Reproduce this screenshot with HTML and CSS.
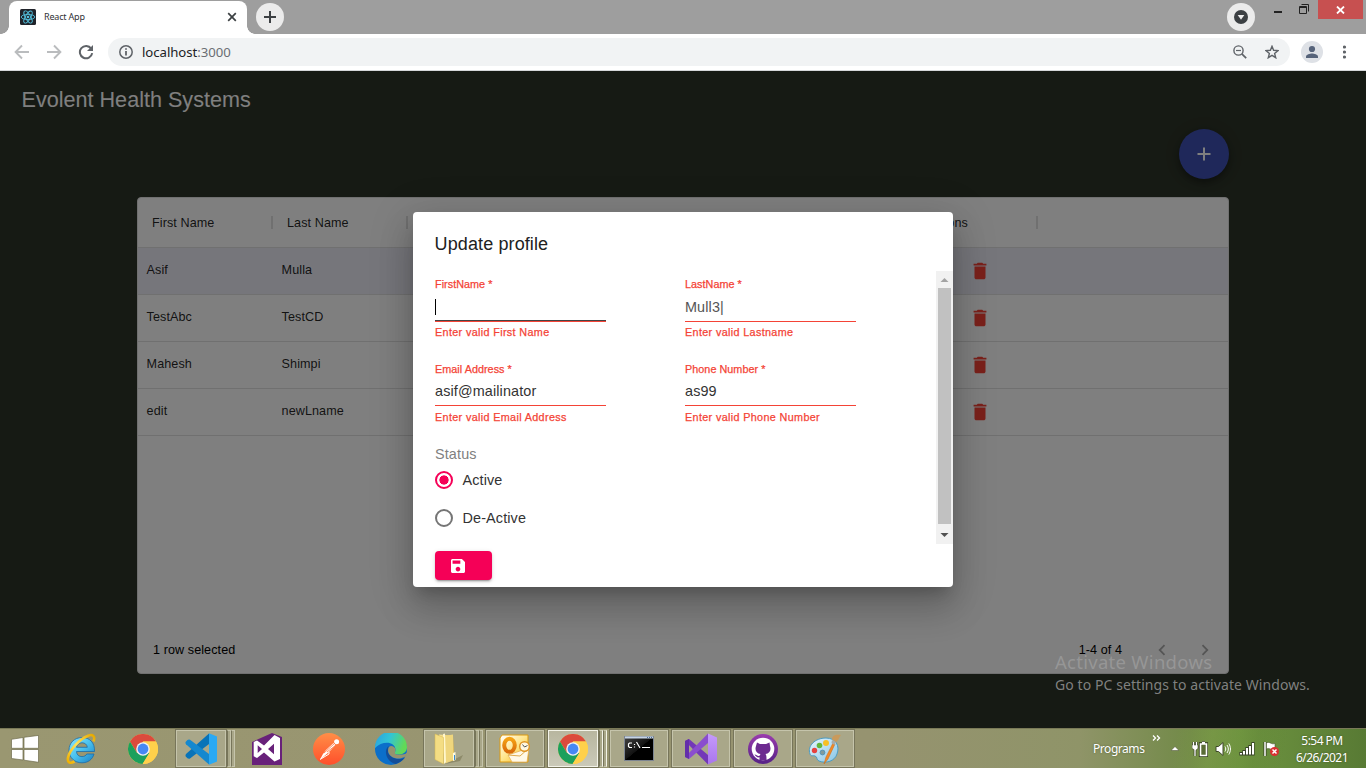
FILE: index.html
```html
<!DOCTYPE html>
<html lang="en">
<head>
<meta charset="utf-8">
<title>React App</title>
<link rel="stylesheet" href="styles.css">
</head>
<body>
<svg class="defs" width="0" height="0">
  <defs>
    <linearGradient id="ie" x1="0" y1="0" x2="1" y2="1"><stop offset="0" stop-color="#8fe6fd"/><stop offset=".5" stop-color="#49c1ee"/><stop offset="1" stop-color="#1a7fc4"/></linearGradient>
    <linearGradient id="gold" x1="1" y1="0" x2="0" y2="1"><stop offset="0" stop-color="#e5a800"/><stop offset=".5" stop-color="#ffe25a"/><stop offset="1" stop-color="#f0b000"/></linearGradient>
    <linearGradient id="post" x1="0" y1="0" x2="0" y2="1"><stop offset="0" stop-color="#ff8e47"/><stop offset="1" stop-color="#ff4f2b"/></linearGradient>
    <linearGradient id="edgetop" x1="0" y1="0" x2="1" y2=".3"><stop offset="0" stop-color="#2a9fe0"/><stop offset=".5" stop-color="#31c4d6"/><stop offset="1" stop-color="#62d957"/></linearGradient>
    <linearGradient id="paper" x1="0" y1="0" x2="1" y2="0"><stop offset="0" stop-color="#f7e59a"/><stop offset="1" stop-color="#e3bd50"/></linearGradient>
    <linearGradient id="outl" x1="0" y1="0" x2="1" y2="1"><stop offset="0" stop-color="#fff"/><stop offset=".5" stop-color="#ffe58a"/><stop offset="1" stop-color="#f3b010"/></linearGradient>
    <linearGradient id="orange" x1="0" y1="0" x2="0" y2="1"><stop offset="0" stop-color="#f5a213"/><stop offset="1" stop-color="#d96b0b"/></linearGradient>
    <linearGradient id="cmd" x1="0" y1="0" x2="1" y2="1"><stop offset="0" stop-color="#444"/><stop offset=".5" stop-color="#111"/><stop offset=".51" stop-color="#000"/></linearGradient>
    <linearGradient id="vsr" x1="0" y1="0" x2="0" y2="1"><stop offset="0" stop-color="#c59bfb"/><stop offset="1" stop-color="#a975ee"/></linearGradient>
    <linearGradient id="gh" x1="0" y1="0" x2="0" y2="1"><stop offset="0" stop-color="#9a3cae"/><stop offset="1" stop-color="#562286"/></linearGradient>
    <linearGradient id="pal" x1="0" y1="0" x2="1" y2="1"><stop offset="0" stop-color="#e8f6fd"/><stop offset="1" stop-color="#86c5e6"/></linearGradient>
    <symbol id="chrome" viewBox="0 0 30 30">
      <circle cx="15" cy="15" r="15" fill="#ffd04b"/>
      <path d="M15 7.5H28A15 15 0 0 0 2 7.5L9 19Z" fill="#db4a3d"/>
      <path d="M2 7.5A15 15 0 0 0 14.6 30L21.3 19 9 19Z" fill="#1ca05c"/>
      <path d="M28 7.5H15L21.5 18.8 14.6 30A15 15 0 0 0 28 7.5Z" fill="#ffd04b"/>
      <circle cx="15" cy="15" r="6.8" fill="#f1f1f1"/><circle cx="15" cy="15" r="5.4" fill="#4788f3"/>
    </symbol>
    <symbol id="trash" viewBox="0 0 24 24"><path fill="#f44336" d="M6 19c0 1.100.900 2 2 2h8c1.100 0 2-.900 2-2V7H6v12zM19 4h-3.500l-1-1h-5l-1 1H5v2h14V4z"/></symbol>
  </defs>
</svg>

<header class="tabstrip">
  <div class="tab">
    <svg class="favicon" viewBox="0 0 16 16"><rect width="16" height="16" rx="1.500" fill="#20232a"/><g fill="none" stroke="#53c1de" stroke-width=".9"><ellipse cx="8" cy="8" rx="6.800" ry="2.600"/><ellipse cx="8" cy="8" rx="6.800" ry="2.600" transform="rotate(60 8 8)"/><ellipse cx="8" cy="8" rx="6.800" ry="2.600" transform="rotate(120 8 8)"/></g><circle cx="8" cy="8" r="1.300" fill="#53c1de"/></svg>
    <span class="tab-title">React App</span>
    <svg class="tab-close" viewBox="0 0 10 10"><path d="M1.200 1.200 8.800 8.800M8.800 1.200 1.200 8.800" stroke="#3c4043" stroke-width="1.700"/></svg>
  </div>
  <div class="round"><svg width="12" height="12" viewBox="0 0 12 12"><path d="M6 0V12M0 6H12" stroke="#3c4043" stroke-width="2"/></svg></div>
  <div class="window-tools">
    <div class="round"><svg width="14" height="14" viewBox="0 0 14 14"><circle cx="7" cy="7" r="7" fill="#3c4043"/><path d="M3.700 5H10.300L7 9.700Z" fill="#eee"/></svg></div>
    <svg class="window-min" width="8" height="2"><rect width="8" height="2" fill="#222"/></svg>
    <svg class="window-max" width="10" height="10" viewBox="0 0 10 10"><path d="M.5 2.500H7.500V9.500H.5ZM.5 3.500H7.500M2.500 .5H9.500V7.500" fill="none" stroke="#222"/></svg>
    <div class="window-close"><svg width="9" height="8" viewBox="0 0 9 8"><path d="M1 .5 8 7.500M8 .5 1 7.500" stroke="#fff" stroke-width="1.800"/></svg></div>
  </div>
</header>

<nav class="toolbar">
  <svg class="nav-icon" viewBox="0 0 16 16"><path d="M15 8H2M8 1.500 1.600 8 8 14.500" fill="none" stroke="#babcbe" stroke-width="1.900"/></svg>
  <svg class="nav-icon" viewBox="0 0 16 16"><path d="M1 8H14M8 1.500 14.400 8 8 14.500" fill="none" stroke="#babcbe" stroke-width="1.900"/></svg>
  <svg class="nav-icon" viewBox="0 0 16 16"><path d="M13.200 4.600A6.200 6.200 0 1 0 14.200 9.200" fill="none" stroke="#5f6368" stroke-width="2"/><path d="M15 1V7H9Z" fill="#5f6368"/></svg>
  <div class="omnibox">
    <svg width="14" height="14" viewBox="0 0 14 14"><circle cx="7" cy="7" r="6.200" fill="none" stroke="#5f6368" stroke-width="1.500"/><path d="M7 6V10.500M7 3.200V4.800" stroke="#5f6368" stroke-width="1.800"/></svg>
    <span class="url">localhost<span class="port">:3000</span></span>
    <svg class="magnifier" width="14" height="14" viewBox="0 0 14 14"><circle cx="5.500" cy="5.500" r="4.600" fill="none" stroke="#5f6368" stroke-width="1.400"/><path d="M3 5.500H8" stroke="#5f6368" stroke-width="1.200"/><path d="M8.800 8.800 13.200 13.200" stroke="#5f6368" stroke-width="1.700"/></svg>
    <svg width="14" height="14" viewBox="0 0 14 14"><path d="M7 1.300 8.600 5.300 13 5.600 9.600 8.400 10.700 12.700 7 10.300 3.300 12.700 4.400 8.400 1 5.600 5.400 5.300Z" fill="none" stroke="#5f6368" stroke-width="1.400"/></svg>
  </div>
  <svg class="avatar" width="22" height="22" viewBox="0 0 22 22"><circle cx="11" cy="11" r="11" fill="#dee1e6"/><circle cx="11" cy="8" r="3.100" fill="#56637a"/><path d="M5 17V15.500C5 13.300 9 12.400 11 12.400S17 13.300 17 15.500V17Z" fill="#56637a"/></svg>
  <svg class="kebab" width="4" height="14" viewBox="0 0 4 14"><g fill="#5f6368"><circle cx="1.500" cy="2" r="1.600"/><circle cx="1.500" cy="7" r="1.600"/><circle cx="1.500" cy="12" r="1.600"/></g></svg>
</nav>

<main class="viewport">
  <div class="app">
    <h1 class="brand">Evolent Health Systems</h1>
    <div class="actions"><div class="fab"><svg width="14" height="14" viewBox="0 0 14 14"><path d="M7 .5V13.500M.5 7H13.500" stroke="#fff" stroke-width="2"/></svg></div></div>
    <section class="grid">
      <div class="grid-row grid-head"><span class="cell">First Name</span><span class="cell">Last Name</span><span class="cell wide"></span><span class="cell last">Actions</span></div>
      <div class="grid-row selected"><span class="cell">Asif</span><span class="cell">Mulla</span><span class="cell wide"></span><span class="cell last"><svg class="trash"><use href="#trash"/></svg></span></div>
      <div class="grid-row"><span class="cell">TestAbc</span><span class="cell">TestCD</span><span class="cell wide"></span><span class="cell last"><svg class="trash"><use href="#trash"/></svg></span></div>
      <div class="grid-row"><span class="cell">Mahesh</span><span class="cell">Shimpi</span><span class="cell wide"></span><span class="cell last"><svg class="trash"><use href="#trash"/></svg></span></div>
      <div class="grid-row"><span class="cell">edit</span><span class="cell">newLname</span><span class="cell wide"></span><span class="cell last"><svg class="trash"><use href="#trash"/></svg></span></div>
      <footer class="grid-foot">
        <span>1 row selected</span>
        <span class="range">1-4 of 4</span>
        <svg width="8" height="12" viewBox="0 0 8 12"><path d="M6.500 1.200 1.700 6 6.500 10.800" fill="none" stroke="#aaa" stroke-width="1.800"/></svg>
        <svg class="next" width="8" height="12" viewBox="0 0 8 12"><path d="M1.500 1.200 6.300 6 1.500 10.800" fill="none" stroke="#aaa" stroke-width="1.800"/></svg>
      </footer>
    </section>
  </div>

  <div class="backdrop">
    <div class="dialog">
      <h2 class="dialog-title">Update profile</h2>
      <div class="dialog-body">
        <form class="form">
          <div class="field-row">
            <div class="field"><span class="label">FirstName *</span><span class="input focused"><i class="caret"></i></span><span class="helper">Enter valid First Name</span></div>
            <div class="field"><span class="label">LastName *</span><span class="input muted">Mull3|</span><span class="helper">Enter valid Lastname</span></div>
          </div>
          <div class="field-row second">
            <div class="field"><span class="label">Email Address *</span><span class="input">asif@mailinator</span><span class="helper">Enter valid Email Address</span></div>
            <div class="field"><span class="label">Phone Number *</span><span class="input">as99</span><span class="helper">Enter valid Phone Number</span></div>
          </div>
          <div class="status">Status</div>
          <div class="choice"><i class="radio on"></i>Active</div>
          <div class="choice"><i class="radio"></i>De-Active</div>
        </form>
        <div class="scrollbar">
          <svg width="17" height="17" viewBox="0 0 17 17"><path d="M4.500 11 8.500 7 12.500 11Z" fill="#a3a3a3"/></svg>
          <div class="thumb"></div>
          <svg width="17" height="17" viewBox="0 0 17 17"><path d="M4.500 6 8.500 10 12.500 6Z" fill="#505050"/></svg>
        </div>
      </div>
      <div class="dialog-actions"><div class="save"><svg width="14" height="14" viewBox="3 3 18 18"><path fill="#fff" d="M17 3H5c-1.110 0-2 .9-2 2v14c0 1.100.89 2 2 2h14c1.100 0 2-.9 2-2V7l-4-4zm-5 16c-1.660 0-3-1.340-3-3s1.340-3 3-3 3 1.340 3 3-1.340 3-3 3zm3-10H5V5h10v4z"/></svg></div></div>
    </div>
  </div>

  <aside class="watermark"><div class="wm-title">Activate Windows</div><div class="wm-text">Go to PC settings to activate Windows.</div></aside>
</main>

<footer class="taskbar">
  <div class="start"><svg width="28" height="28" viewBox="0 0 28 28"><g fill="#fff" stroke="#6f6c4c" stroke-width=".7"><path d="M.5 4.300 12 2.500V13.300H.5ZM13 2.300 27.500 .4V13.300H13ZM.5 14.500H12V25L.5 23.500ZM13 14.500H27.500V27.300L13 25.200Z"/></g></svg></div>
  <div class="slot"><svg width="32" height="32" viewBox="0 0 32 32">
    <path d="M29.500 18.500H11.500C11.700 22 14 23.600 17 23.600 19.500 23.600 21 22.500 21.800 21H29C27.500 26.500 23 29.800 17 29.800 9.500 29.800 4 24.500 4 17.200 4 10 9.500 4.500 17 4.500 24.500 4.500 30 9.500 29.500 18.500ZM11.500 14.300H22.300C22 11.500 20 9.800 17 9.800S12 11.500 11.500 14.300Z" fill="url(#ie)" stroke="#1c6da8" stroke-width=".8"/>
    <path d="M28.500 8.500C30.500 3.500 28 .5 22.500 3 14.500 6.300 5 16.500 3 24.500 2 29.500 5 31 9.500 28.500" fill="none" stroke="url(#gold)" stroke-width="2.600"/></svg></div>
  <div class="slot"><svg width="30" height="30"><use href="#chrome"/></svg></div>
  <div class="slot open stacked"><div class="pane"><svg width="32" height="32" viewBox="0 0 32 32">
    <path d="M24 .5V11L5 25.500Q3 26.500 .8 23.500 0 22 1 21Z" fill="#0873b8"/><path d="M24 31.500V21L5 6.700Q3 5.700 .8 8.700 0 10 1 11.300Z" fill="#1488cf"/><path d="M24 .3 32 3.500V28.500L24 31.800Z" fill="#2aa9f3"/></svg></div><i></i><i></i></div>
  <div class="slot"><svg width="30" height="32" viewBox="0 0 30 32"><path d="M0 9 20 0 30 4V32H0Z" fill="#68217a"/><path d="M22.500 2 28 5V26L22.500 28.500 12 19.500 5 25 1.700 23.300V9L5 7.500 12 12.500ZM22 10.800 16 16 22 21.300ZM5.700 12.300V20L10 16Z" fill="#fff" fill-rule="evenodd"/></svg></div>
  <div class="slot"><svg width="32" height="32" viewBox="0 0 32 32"><circle cx="16" cy="16" r="16" fill="url(#post)"/><path d="M13 17 20.500 10 22.500 12 16 19 9 25 7 26.500 10 21Z" fill="#fff"/><circle cx="23.600" cy="8.700" r="2.500" fill="#fff"/><path d="M11 20 22 10M14 19 23 12" stroke="#ff713b" stroke-width=".8"/><path d="M16 19 16 21 7 26.500" stroke="#fff" fill="none"/></svg></div>
  <div class="slot"><svg width="32" height="32" viewBox="0 0 32 32"><circle cx="16" cy="16" r="16" fill="#0b6fca"/><path d="M0 15A16 16 0 0 1 32 14C32 20 27 22 22 21.500 18.500 21 20.500 19 20.500 16.500 20 8 7 7.500 0 15Z" fill="url(#edgetop)"/><path d="M13.500 13C8 18 12 29 20.500 31 25 29.500 28 27.500 30 24.500 23 28 15.500 25 13 19.500Z" fill="#134e99"/><path d="M14 14C11.500 18 14 25 22 25.500 25 25.700 28 24.800 30.500 23.500L33 19C30 22 26 22 22 21.500 18.500 21 20.500 19 20.500 16.500 20 13 15.500 12 14 14Z" fill="#96936f"/></svg></div>
  <div class="slot open stacked"><div class="pane"><svg width="32" height="32" viewBox="0 0 32 32"><path d="M20 27 30 22 27 28 12 31Z" fill="#777350" opacity=".55"/><path d="M6 1.500 20 2.500 21 19 22 27 13 30Z" fill="url(#paper)"/><path d="M11 3 20 1.500V27L12 30Z" fill="#efd67d"/><path d="M10 1 12 .5 13 29 11 31Z" fill="#fff7cc"/><path d="M2 1 10.500 4.500V31L2 26.500Z" fill="#f4dd83" stroke="#d9b84f" stroke-width=".5"/><path d="M20 20 22.500 19V27L20 28Z" fill="#fffbe0"/><path d="M21.500 22V27" stroke="#388bd1"/></svg></div><i></i><i></i></div>
  <div class="slot open"><div class="pane"><svg width="32" height="32" viewBox="0 0 32 32"><path d="M3 2H29V29H1V5Z" fill="url(#outl)" stroke="#dc9a10"/><path d="M9 22 30 15 28 29H13Z" fill="#fff9e8" stroke="#dfaa4e" stroke-width=".7"/><path d="M9 22 21 23 30 15" fill="none" stroke="#dfaa4e"/><ellipse cx="10.500" cy="12.300" rx="5.300" ry="6.500" fill="none" stroke="url(#orange)" stroke-width="4"/><circle cx="25.500" cy="13.500" r="4.800" fill="#fff7df" stroke="#e09422" stroke-width="1.400"/><path d="M23.500 11.500 25.500 14 28.500 12.500" stroke="#555" fill="none"/></svg></div></div>
  <div class="slot open active stacked"><div class="pane"><svg width="30" height="30"><use href="#chrome"/></svg></div><i></i><i></i></div>
  <div class="slot open"><div class="pane"><svg width="30" height="25" viewBox="0 0 30 25"><rect x=".5" y=".5" width="29" height="24" fill="url(#cmd)" stroke="#7d8591"/><path d="M1 1.500H29" stroke="#c6d4e4" stroke-width="2"/><path d="M23 1.500H28" stroke="#4c6d9a" stroke-dasharray="1 1"/><path d="M8 7H5.500L4.500 8V10.500L5.500 11.500H8M10.500 8V9M10.500 10.500V11.500M12.500 6 16 12M18 11.500H26" fill="none" stroke="#fff" stroke-width="1.200"/></svg></div></div>
  <div class="slot open"><div class="pane"><svg width="32" height="32" viewBox="0 0 32 32"><path d="M0 8 4 6 23 22V31.500Z" fill="#7338b8"/><path d="M0 24 4 26 23 10V.5Z" fill="#8a4dce"/><path d="M0 8 4 6V26L0 24Z" fill="#632eaa"/><path d="M23 .5 32 4.500V27.500L23 31.500Z" fill="url(#vsr)"/></svg></div></div>
  <div class="slot open"><div class="pane"><svg width="30" height="30" viewBox="0 0 30 30"><circle cx="15" cy="15" r="15" fill="url(#gh)"/><circle cx="15" cy="15" r="11.300" fill="#fff"/><path d="M9 8.500 12 10H18L21.500 8.500 22 12C23.500 16.500 21.500 19.500 17.500 20 18.500 21 18.500 23 18.500 26H11.500V23.300C9 23.800 8 22.500 6.500 20.500 8.500 20.300 9.500 22.500 11.500 21.700L12.500 20C8.500 19.500 6.500 16.500 8 12Z" fill="#6d2a90"/></svg></div></div>
  <div class="slot open"><div class="pane"><svg width="34" height="32" viewBox="0 0 34 32"><path d="M2 21C-1 13 7 5 18 5 28 5 32 13 29 21 27 28 18 31 11 28 8 27 10 24 7 23 5 22 3 24 2 21Z" fill="url(#pal)" stroke="#4b9bc2"/><circle cx="6.500" cy="17.500" r="2.700" fill="#e6433f"/><circle cx="11.500" cy="12.500" r="2.800" fill="#62b63d"/><circle cx="18" cy="10" r="3" fill="#f7bf25"/><circle cx="14.500" cy="19.500" r="2.400" fill="#7f9b9d" stroke="#5496b7"/><path d="M25 10 27 11 20 26 16 31 18 24Z" fill="#f28a27" stroke="#c96815" stroke-width=".5"/><path d="M24 7 28 9 26.500 12 23.500 10Z" fill="#a8aaa8"/><path d="M24 6.500C24 3 27 1 33 2 31 4 31 7 28 9Z" fill="#c99a5c"/></svg></div></div>
  <div class="tray">
    <span class="programs">Programs</span><span class="more"><svg width="9" height="6" viewBox="0 0 9 6"><path d="M1 .5 3.500 3 1 5.500M5 .5 7.500 3 5 5.500" fill="none" stroke="#fff" stroke-width="1.300"/></svg></span>
    <svg class="up" width="8" height="5" viewBox="0 0 8 5"><path d="M0 4.500 4 .5 8 4.500Z" fill="#fff" stroke="#454b2c" stroke-width=".5"/></svg>
    <svg class="battery" width="16" height="16" viewBox="0 0 16 16"><path d="M3 15V8M1.500 1V5M4.500 1V5" stroke="#30381e" stroke-width="2.600" fill="none"/><path d="M0 4H6V7.500L3.500 9.500 0 7.500Z" fill="#fff" stroke="#30381e" stroke-width=".6"/><path d="M3 15V8M1.500 1V5M4.500 1V5" stroke="#fff" stroke-width="1.300"/><path d="M8.500 3H14.500V14.500H8.500ZM10 1.500H13" fill="none" stroke="#30381e" stroke-width="3.300"/><path d="M8.500 3H14.500V14.500H8.500ZM10 1.500H13" fill="#596b35" stroke="#fff" stroke-width="1.600"/></svg>
    <svg class="sound" width="16" height="16" viewBox="0 0 16 16"><path d="M1 5.500H3.500L8 1.500V14.500L3.500 10.500H1Z" fill="#fff" stroke="#3e482a"/><path d="M10 5.500C11 7 11 9 10 10.500M12 4C13.800 6.500 13.800 9.500 12 12M13.800 2.500C16 6 16 10 13.800 13.500" fill="none" stroke="#fff"/></svg>
    <svg class="signal" width="16" height="14" viewBox="0 0 16 14"><path d="M2 13.500V10M5 13.500V8M8 13.500V5M11 13.500V3M14 13.500V0" stroke="#37422a" stroke-width="3.200"/><path d="M2 12.500V11M5 12.500V9M8 12.500V6M11 12.500V4M14 12.500V1" stroke="#fff" stroke-width="2"/></svg>
    <svg class="flag" width="17" height="16" viewBox="0 0 17 16"><path d="M2 1V15" stroke="#303c20" stroke-width="3"/><path d="M2 1V15" stroke="#fff" stroke-width="1.500"/><path d="M3.500 2C7 0 8 4 12 2.500V8C8 10 7 6.500 3.500 8Z" fill="#fff" stroke="#4c5936" stroke-width=".6"/><circle cx="11.500" cy="10.500" r="4.500" fill="#d93030"/><path d="M9.500 8.500 13.500 12.500M13.500 8.500 9.500 12.500" stroke="#fff" stroke-width="1.500"/></svg>
    <div class="clock"><span class="time">5:54 PM</span><span>6/26/2021</span></div>
  </div>
</footer>
</body>
</html>
```

FILE: styles.css
```css
* { box-sizing: border-box; }
body { margin: 0; width: 1366px; height: 768px; overflow: hidden; display: flex; flex-direction: column; font-family: "Liberation Sans", Arial, sans-serif; }
svg { display: block; flex: none; }
.defs { position: absolute; }

/* Browser chrome */
.tabstrip { height: 34px; background: #9e9e9e; display: flex; align-items: flex-start; padding: 1px 3px 0 9px; font-family: "Noto Sans", sans-serif; }
.tab { position: relative; width: 238px; height: 33px; background: #fff; border-radius: 8px 8px 0 0; display: flex; align-items: center; padding: 0 10px 2px 11px; margin-right: 9px; }
.tab::before, .tab::after { content: ""; position: absolute; bottom: 0; width: 8px; height: 8px; }
.tab::before { left: -8px; background: radial-gradient(circle at 0 0, transparent 7.5px, #fff 8px); }
.tab::after { right: -8px; background: radial-gradient(circle at 100% 0, transparent 7.5px, #fff 8px); }
.favicon { width: 16px; height: 16px; }
.tab-title { margin-left: 8px; font-size: 9px; letter-spacing: -.18px; color: #303236; flex: 1; }
.tab-close { width: 10px; height: 10px; }
.round { width: 28px; height: 28px; margin-top: 2px; border-radius: 50%; background: #ebebeb; display: flex; align-items: center; justify-content: center; }
.window-tools { margin-left: auto; display: flex; align-items: flex-start; }
.window-min { margin: 10px 17px 0 19px; }
.window-max { margin: 3px 9px 0 0; }
.window-close { width: 45px; height: 19px; margin-top: -1px; background: #c75050; display: flex; align-items: center; justify-content: center; }
.toolbar { height: 37px; background: #fff; border-bottom: 1px solid #d5d7d9; display: flex; align-items: center; padding: 0 19px 0 14px; }
.nav-icon { width: 16px; height: 16px; margin-right: 16px; }
.omnibox { width: 1182px; height: 28px; margin-left: -2px; background: #f1f3f4; border-radius: 14px; display: flex; align-items: center; padding: 0 11px; }
.url { margin-left: 9px; font: 13.2px "Noto Sans", sans-serif; letter-spacing: -.05px; color: #202124; }
.port { color: #6a6e73; }
.magnifier { margin: 0 18px 0 auto; }
.avatar { margin-left: 11px; }
.kebab { margin-left: auto; }

/* Page */
.viewport { position: relative; height: 657px; flex: none; overflow: hidden; }
.app { height: 100%; background: #2d3428; padding: 17px 137px 0; }
.brand { margin: 0 0 0 -115.5px; font-size: 21.6px; font-weight: 400; line-height: 24px; color: #fff; }
.actions { display: flex; justify-content: flex-end; margin-top: 17px; }
.fab { width: 50px; height: 50px; border-radius: 50%; background: #3f51b5; display: flex; align-items: center; justify-content: center; box-shadow: 0 3px 5px rgba(0,0,0,.2), 0 5px 9px rgba(0,0,0,.14), 0 1px 16px rgba(0,0,0,.12); }
.grid { height: 477px; margin-top: 18px; background: #fff; border: 1px solid #e0e0e0; border-radius: 4px; display: flex; flex-direction: column; font-size: 12.6px; letter-spacing: .08px; color: rgba(0,0,0,.87); }
.grid-row { height: 47px; border-bottom: 1px solid #e0e0e0; display: flex; align-items: center; }
.grid-row:not(.grid-head) { padding-bottom: 3px; }
.grid-head { height: 50px; }
.selected { background: #ececf6; }
.cell { width: 135px; padding-left: 8.6px; display: flex; align-items: center; }
.grid-head .cell { height: 13px; padding-left: 14px; border-right: 2px solid #e0e0e0; }
.cell.wide, .grid-head .cell.wide { width: 495px; border-color: transparent; }
.cell.last { padding-left: 66px; }
.grid-head .cell.last { padding-left: 23px; }
.trash { width: 22px; height: 22px; margin-top: 3px; }
.grid-foot { margin-top: auto; height: 47px; display: flex; align-items: center; padding: 0 19px 0 15px; color: #000; }
.range { margin: 0 36px 0 auto; }
.next { margin-left: 35px; }

/* Dialog */
.backdrop { position: absolute; inset: 0; background: rgba(0,0,0,.5); display: flex; align-items: center; justify-content: center; }
.dialog { width: 540px; height: 375px; background: #fff; border-radius: 4px; display: flex; flex-direction: column; box-shadow: 0 10px 14px -6px rgba(0,0,0,.2), 0 22px 34px 3px rgba(0,0,0,.14), 0 8px 41px 7px rgba(0,0,0,.12); }
.dialog-title { margin: 0; height: 59px; padding: 19px 21.6px 0; font-size: 18px; line-height: 26px; font-weight: 400; letter-spacing: .11px; color: #212121; }
.dialog-body { height: 273px; display: flex; justify-content: space-between; }
.form { width: 480px; padding: 5px 0 0 22px; font-size: 14.4px; letter-spacing: .135px; color: #333; }
.field-row { display: flex; gap: 79px; height: 85px; }
.field { width: 171px; display: flex; flex-direction: column; }
.label { height: 16px; line-height: 16px; font-size: 10.8px; letter-spacing: .04px; color: #f44336; -webkit-text-stroke: .25px #f44336; }
.input { height: 30px; line-height: 30px; border-bottom: 1px solid #f44336; }
.second .input { height: 29px; line-height: 28px; }
.input.focused { border-bottom: 1px solid #f44336; box-shadow: inset 0 -1px #444; padding-top: 7px; }
.input.muted { color: #555; }
.caret { display: block; width: 1px; height: 16px; background: #000; }
.helper { margin-top: 2px; height: 16px; line-height: 17px; font-size: 10.8px; letter-spacing: .35px; color: #f44336; -webkit-text-stroke: .25px #f44336; }
.second .helper { margin-top: 3px; }
.status { height: 14px; margin-top: 1px; line-height: 14px; color: #808080; }
.choice { height: 38px; margin-left: -.5px; display: flex; align-items: center; gap: 10px; }
.radio { width: 18px; height: 18px; border: 2px solid #757575; border-radius: 50%; }
.radio.on { border-color: #f50057; background: radial-gradient(circle, #f50057 4.3px, transparent 4.9px); }
.scrollbar { width: 17px; background: #f1f1f1; display: flex; flex-direction: column; }
.thumb { width: 13px; height: 236px; margin: 0 2px 3px; background: #c1c1c1; }
.dialog-actions { padding: 7px 22px; }
.save { width: 57px; height: 29px; padding-left: 16px; border-radius: 4px; background: #f50057; display: flex; align-items: center; box-shadow: 0 3px 1px -2px rgba(0,0,0,.2), 0 2px 2px rgba(0,0,0,.14), 0 1px 5px rgba(0,0,0,.12); }

.watermark { position: absolute; left: 1055px; top: 577px; font-family: "Noto Sans", sans-serif; color: rgba(157,157,157,.8); white-space: nowrap; }
.wm-title { font-size: 18.5px; letter-spacing: .28px; line-height: 28px; }
.wm-text { font-size: 14px; letter-spacing: .08px; line-height: 18px; }

/* Desktop taskbar */
.taskbar { height: 40px; flex: none; display: flex; border-top: 1px solid #7a7a58; background: linear-gradient(100deg, transparent 1160px, rgba(133,168,72,.3) 1195px, rgba(80,115,40,.1) 1240px, transparent 1270px), linear-gradient(90deg, #9a9771 0, #969370 870px, #8f9468 1080px, #728a48 1190px, #6e9440 1240px, #587a34 1366px); }
.start { width: 50px; display: flex; align-items: center; padding-left: 11px; }
.slot { width: 62px; display: flex; align-items: center; justify-content: center; }
.open { padding: 0 1px; align-items: stretch; }
.pane { flex: 1; display: flex; align-items: center; justify-content: center; border: 1px solid #c5c4ab; outline: 1px solid #77755a; background: #a9a789; margin: 1px; }
.stacked i { width: 4px; margin: 1px 0; border: 1px solid #c5c4ab; border-left-color: #77755a; background: #a9a789; }
.active .pane { background: linear-gradient(#b8b69f, #cac9b8); border-color: #f3f3e8; }
.active i { border-right-color: #f3f3e8; }
.tray { flex: 1; display: flex; align-items: center; font-family: "Noto Sans", sans-serif; font-size: 12px; color: #fff; padding: 0 18px 0 0; text-shadow: 0 0 2px rgba(50,60,30,.6); }
.programs { margin-left: 237px; width: 59px; letter-spacing: -.45px; }
.more { padding-bottom: 21px; }
.up { margin-left: 10px; }
.battery { margin-left: 13px; }
.sound { margin-left: 7px; }
.signal { margin-left: 8px; }
.flag { margin-left: 8px; }
.clock { margin-left: auto; display: flex; flex-direction: column; align-items: center; line-height: 17px; letter-spacing: -.55px; white-space: nowrap; }
```
